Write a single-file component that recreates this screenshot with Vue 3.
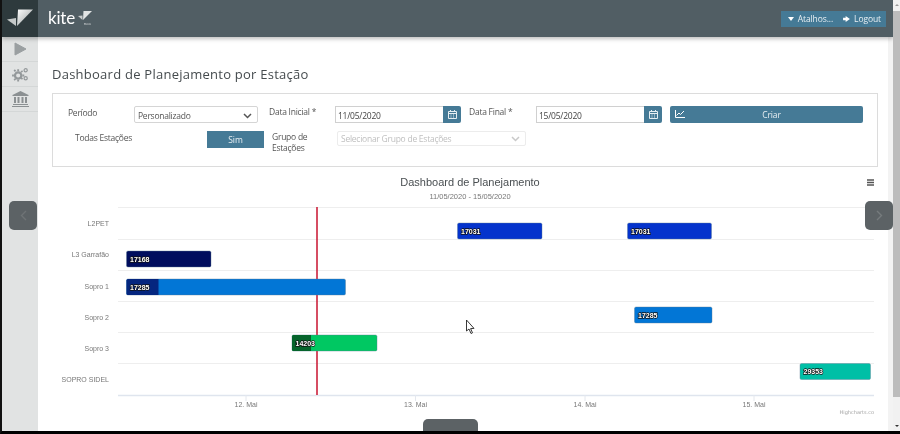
<template>
  <div class="frame">
    <header class="topbar">
      <div class="brand-mark">
        <svg width="36" height="37" viewBox="0 0 36 37">
          <defs>
            <linearGradient id="markGrad" x1="0" y1="0" x2="1" y2="1">
              <stop offset="0" stop-color="#ffffff" />
              <stop offset="0.55" stop-color="#c4c8c8" />
              <stop offset="1" stop-color="#6f7777" />
            </linearGradient>
          </defs>
          <path d="M16 9.5 L31 9.5 L15 26 Z" fill="url(#markGrad)" />
          <path d="M5 19.5 L14 18 L14 26 Z" fill="#c4c8c8" />
        </svg>
      </div>
      <div class="logo">
        <span class="logo-word">kite</span>
        <svg class="logo-mark" width="14" height="13" viewBox="0 0 14 13">
          <path d="M5.5 1 L14 1 L5 10 Z" fill="#e2e4e4" />
          <path d="M0 6 L4.5 5.5 L4.5 10 Z" fill="#c9cccc" />
        </svg>
        <span class="logo-sub">neo</span>
      </div>
      <div class="top-actions">
        <button class="top-btn">
          <svg width="6" height="4" viewBox="0 0 6 4"><path d="M0 0 H6 L3 4 Z" fill="#fff" /></svg>
          Atalhos...
        </button>
        <button class="top-btn">
          <svg width="7" height="6" viewBox="0 0 8 7"><path d="M0 2 H3 V0 L8 3.5 L3 7 V5 H0 Z" fill="#fff" /></svg>
          Logout
        </button>
      </div>
    </header>

    <div class="workspace">
      <aside class="sidebar">
        <div class="side-item">
          <svg width="13" height="14" viewBox="0 0 13 14"><path d="M1 1 L12 7 L1 13 Z" fill="#9a9fa1" stroke="#9a9fa1" /></svg>
        </div>
        <div class="side-item">
          <svg width="17" height="15" viewBox="0 0 18 16" fill="#94999b">
            <circle cx="6.5" cy="9" r="3.4" fill="none" stroke="#94999b" stroke-width="2.4" />
            <path d="M5.5 2.5h2v2h-2zM5.5 13.5h2v2h-2zM0 8h2v2H0zM11 8h2v2h-2zM1.6 3.6l1.4-1.2 1.4 1.6-1.4 1.2zM9 12l1.4-1.2 1.4 1.6-1.4 1.2zM1.6 13.4l1.6-1.6 1.2 1.2-1.6 1.6zM9 5l1.6-1.6 1.2 1.2-1.6 1.6z" />
            <circle cx="14.5" cy="3.5" r="1.7" fill="none" stroke="#94999b" stroke-width="1.3" />
            <circle cx="14.5" cy="12" r="1.7" fill="none" stroke="#94999b" stroke-width="1.3" />
          </svg>
        </div>
        <div class="side-item">
          <svg width="17" height="16" viewBox="0 0 17 16" fill="#8b9092">
            <path d="M8.5 0 L16.5 4 V5 H0.5 V4 Z" />
            <path d="M2 6h2v6H2zM5.5 6h2v6h-2zM9.5 6h2v6h-2zM13 6h2v6h-2z" />
            <path d="M1 13h15v1H1zM0 15h17v1H0z" />
          </svg>
        </div>
      </aside>

      <main class="content">
        <h1 class="page-title">Dashboard de Planejamento por Estação</h1>

        <section class="filters">
          <div class="filter-row first">
            <label class="lbl lbl-period">Período</label>
            <div class="select sel-period">
              <span>Personalizado</span>
              <svg width="9" height="6" viewBox="0 0 9 6"><path d="M1 1 L4.5 4.5 L8 1" fill="none" stroke="#555" stroke-width="1.5" /></svg>
            </div>
            <label class="lbl lbl-start">Data Inicial *</label>
            <div class="date-field start">
              <span class="date-value">11/05/2020</span>
              <span class="date-btn">
                <svg width="9" height="9" viewBox="0 0 9 9"><path d="M0.5 1.5h8v7h-8z M0.5 3.5h8 M2.5 0v2 M6.5 0v2 M2.5 5h1 M5 5h1 M2.5 7h1 M5 7h1" fill="none" stroke="#e6eef2" /></svg>
              </span>
            </div>
            <label class="lbl lbl-end">Data Final *</label>
            <div class="date-field end">
              <span class="date-value">15/05/2020</span>
              <span class="date-btn">
                <svg width="9" height="9" viewBox="0 0 9 9"><path d="M0.5 1.5h8v7h-8z M0.5 3.5h8 M2.5 0v2 M6.5 0v2 M2.5 5h1 M5 5h1 M2.5 7h1 M5 7h1" fill="none" stroke="#e6eef2" /></svg>
              </span>
            </div>
            <button class="btn-create">
              <svg width="10" height="8" viewBox="0 0 10 8"><path d="M0.5 0v7.5h9.5 M1.5 5.5 L4 3 L5.5 4.5 L9 1" fill="none" stroke="#fff" /></svg>
              <span>Criar</span>
            </button>
          </div>
          <div class="filter-row second">
            <label class="lbl lbl-all">Todas Estações</label>
            <button class="btn-yes">Sim</button>
            <label class="lbl lbl-group">Grupo de<br />Estações</label>
            <div class="select sel-group">
              <span>Selecionar Grupo de Estações</span>
              <svg width="9" height="6" viewBox="0 0 9 6"><path d="M1 1 L4.5 4.5 L8 1" fill="none" stroke="#c9c9c9" stroke-width="1.5" /></svg>
            </div>
          </div>
        </section>

        <section class="chart">
          <svg width="826" height="262" viewBox="52 168 826 262">
            <text x="470" y="186" class="chart-title" text-anchor="middle">Dashboard de Planejamento</text>
            <text x="470" y="199" class="chart-sub" text-anchor="middle">11/05/2020 - 15/05/2020</text>
            <path d="M867 180h7M867 182.5h7M867 185h7" stroke="#555" stroke-width="1.6" />

            <line v-for="y in gridLines" :key="y" x1="118" x2="874" :y1="y + 0.5" :y2="y + 0.5" stroke="#eeeeee" />
            <line x1="118" x2="874" y1="395.5" y2="395.5" stroke="#dfe5ee" stroke-width="1.5" />
            <line v-for="t in ticks" :key="t.label" :x1="t.x" :x2="t.x" y1="395" y2="401" stroke="#e4e8ee" />
            <text v-for="t in ticks" :key="'l' + t.label" :x="t.x" y="407" class="tick" text-anchor="middle">{{ t.label }}</text>

            <text v-for="r in rows" :key="r.name" x="109" :y="r.y" class="row-name" text-anchor="end">{{ r.name }}</text>

            <line x1="317" x2="317" y1="207" y2="395" stroke="#c8132f" stroke-width="1.5" />

            <g v-for="b in bars" :key="b.x + '-' + b.y">
              <rect :x="b.x" :y="b.y" :width="b.w" height="16" rx="1.5" :fill="b.color" stroke="#5c7b95" stroke-width="0.4" />
              <path v-if="b.done" :d="`M${b.x + 1.5} ${b.y} H${b.x + b.done} V${b.y + 16} H${b.x + 1.5} Q${b.x} ${b.y + 16} ${b.x} ${b.y + 14.5} V${b.y + 1.5} Q${b.x} ${b.y} ${b.x + 1.5} ${b.y} Z`" :fill="b.doneColor" />
              <text :x="b.x + 3.5" :y="b.y + 10.5" class="bar-label">{{ b.label }}</text>
            </g>

            <text x="874" y="413.5" class="credit" text-anchor="end">Highcharts.co</text>

            <g>
              <path d="M466.5 320 V331 L469 329 L471 333.5 L472.5 332.8 L470.6 328.6 L474 328.4 Z" fill="#fff" stroke="#222" stroke-width="0.9" />
            </g>
          </svg>
        </section>
      </main>
      <div class="scroll-gutter"></div>
      <div class="scrollbar">
        <span class="scroll-arrow up"></span>
        <span class="scroll-thumb"></span>
        <span class="scroll-arrow down"></span>
      </div>
    </div>

    <button class="side-nav prev">
      <svg width="7" height="11" viewBox="0 0 7 11"><path d="M6 1 L1.5 5.5 L6 10" fill="none" stroke="#6e7375" stroke-width="1.4" /></svg>
    </button>
    <button class="side-nav next">
      <svg width="7" height="11" viewBox="0 0 7 11"><path d="M1 1 L5.5 5.5 L1 10" fill="none" stroke="#767b7d" stroke-width="1.4" /></svg>
    </button>
    <div class="bottom-tab"></div>
  </div>
</template>

<script setup>
const gridLines = [207, 239, 270, 301, 332, 363]

const ticks = [
  { x: 246, label: '12. Mai' },
  { x: 415.5, label: '13. Mai' },
  { x: 585, label: '14. Mai' },
  { x: 754, label: '15. Mai' },
]

const rows = [
  { name: 'L2PET', y: 226 },
  { name: 'L3 Garrafão', y: 257 },
  { name: 'Sopro 1', y: 289 },
  { name: 'Sopro 2', y: 320 },
  { name: 'Sopro 3', y: 351 },
  { name: 'SOPRO SIDEL', y: 382 },
]

const bars = [
  { x: 457.5, y: 223, w: 84.5, color: '#0433cc', label: '17031' },
  { x: 627.5, y: 223, w: 84, color: '#0433cc', label: '17031' },
  { x: 126.5, y: 251, w: 84.5, color: '#000d5e', label: '17168' },
  { x: 126.5, y: 279, w: 219, color: '#0276d6', done: 32, doneColor: '#05267f', label: '17285' },
  { x: 634.5, y: 307, w: 77.5, color: '#0276d6', label: '17285' },
  { x: 292, y: 335, w: 85, color: '#00c862', done: 19, doneColor: '#06642c', label: '14203' },
  { x: 800, y: 363.5, w: 70.5, color: '#00bfa6', label: '29353' },
]
</script>

<style scoped>
.frame {
  position: relative;
  width: 900px;
  height: 434px;
  overflow: hidden;
  box-sizing: border-box;
  border-left: 2px solid #111;
  border-bottom: 3px solid #000;
  background: #fff;
  font-family: "Open Sans", "Noto Sans", sans-serif;
  color: #444;
  filter: blur(0.3px);
}

.topbar {
  position: relative;
  z-index: 2;
  display: flex;
  align-items: center;
  width: 891px;
  height: 37px;
  background: #515e64;
  box-shadow: 0 2px 4px rgba(0, 0, 0, 0.25);
}

.brand-mark {
  width: 36px;
  height: 37px;
  background: #2e3a3d;
}

.logo {
  display: flex;
  align-items: center;
  position: relative;
  margin-left: 10px;
  height: 37px;
}

.logo-word {
  font-family: Lato, sans-serif;
  font-weight: 400;
  font-size: 17px;
  letter-spacing: -0.2px;
  color: #fff;
  line-height: 1;
  margin-top: -3px;
}

.logo-mark {
  margin-left: 3px;
  margin-top: -4px;
}

.logo-sub {
  position: absolute;
  right: 1px;
  top: 21px;
  font-size: 4px;
  color: #dfe2e2;
}

.top-actions {
  display: flex;
  align-items: center;
  margin-left: auto;
  margin-right: 7px;
  height: 16px;
  background: #457a96;
  padding: 0 5px 0 7px;
  gap: 10px;
}

.top-btn {
  display: flex;
  align-items: center;
  gap: 4px;
  padding: 0;
  border: 0;
  background: none;
  color: #e8eff3;
  font-family: inherit;
  font-size: 8.5px;
  letter-spacing: -0.1px;
}

.workspace {
  display: flex;
  height: 394px;
}

.sidebar {
  flex: none;
  width: 36px;
  background: #e1e3e3;
  box-shadow: 2px 0 3px rgba(0, 0, 0, 0.08);
}

.side-item {
  display: flex;
  align-items: center;
  justify-content: center;
  height: 24px;
  border-bottom: 1px solid #d4d7d7;
}

.content {
  flex: none;
  width: 850px;
  box-sizing: border-box;
  padding: 28px 10px 0 14px;
  background: #fff;
}

.page-title {
  margin: 0 0 10px;
  font-size: 13px;
  line-height: 18px;
  font-weight: 400;
  letter-spacing: 0.25px;
  color: #454b4e;
}

.filters {
  box-sizing: border-box;
  height: 74px;
  border: 1px solid #dcdcdc;
}

.filter-row {
  display: flex;
  font-size: 8.5px;
  letter-spacing: -0.25px;
}

.filter-row.first {
  height: 17px;
  margin-top: 12px;
}

.filter-row.second {
  margin-top: 8px;
}

.lbl {
  color: #555;
  line-height: 11px;
}

.lbl-period {
  width: 66px;
  margin-left: 15px;
  padding-top: 1px;
}

.sel-period {
  width: 124px;
}

.lbl-start {
  width: 66px;
  margin-left: 11px;
}

.lbl-end {
  width: 67px;
  margin-left: 8px;
}

.select {
  display: flex;
  align-items: center;
  justify-content: space-between;
  box-sizing: border-box;
  padding: 2px 5px 0 3px;
  background: #fff;
  border: 1px solid #d5d5d5;
  border-radius: 2px;
  color: #555;
}

.date-field {
  display: flex;
  width: 126px;
}

.date-value {
  flex: 1;
  box-sizing: border-box;
  padding: 2px 0 0 2px;
  line-height: 13px;
  border: 1px solid #d0d0d0;
  border-right: 0;
  color: #444;
}

.date-btn {
  display: flex;
  align-items: center;
  justify-content: center;
  width: 18px;
  background: #457a96;
  border-radius: 0 2px 2px 0;
}

.btn-create {
  position: relative;
  width: 193px;
  margin-left: 8px;
  padding: 0 0 0 10px;
  border: 0;
  border-radius: 2px;
  background: #457a96;
  color: #e8eff3;
  font-family: inherit;
  font-size: 8.5px;
  letter-spacing: -0.1px;
}

.btn-create svg {
  position: absolute;
  left: 5px;
  top: 4px;
}

.lbl-all {
  width: 132px;
  margin-left: 22px;
  padding-top: 1px;
}

.btn-yes {
  width: 57px;
  height: 17px;
  padding: 0;
  border: 0;
  background: #457a96;
  color: #e8eff3;
  font-family: inherit;
  font-size: 8.5px;
}

.lbl-group {
  width: 65px;
  margin-left: 8px;
}

.sel-group {
  width: 189px;
  height: 15px;
  padding: 0 5px 0 3px;
  border-color: #ececec;
  color: #c0c0c0;
}

.chart {
  margin-top: 1px;
}

.chart svg {
  display: block;
}

.chart-title {
  font-family: "Liberation Sans", sans-serif;
  font-size: 11px;
  fill: #4a4f52;
}

.chart-sub {
  font-family: "Liberation Sans", sans-serif;
  font-size: 7.5px;
  fill: #777;
}

.row-name {
  font-family: "Liberation Sans", sans-serif;
  font-size: 7px;
  fill: #777;
}

.tick {
  font-family: "Liberation Sans", sans-serif;
  font-size: 7px;
  fill: #777;
}

.credit {
  font-family: "DejaVu Sans", sans-serif;
  font-size: 5px;
  fill: #a5a5a5;
}

.bar-label {
  font-family: "Liberation Sans", sans-serif;
  font-size: 7px;
  font-weight: 700;
  fill: #fff;
  stroke: #111;
  stroke-width: 1.3px;
  paint-order: stroke;
}

.scroll-gutter {
  flex: none;
  width: 5px;
  background: #f3f3f3;
}

.scrollbar {
  display: flex;
  flex-direction: column;
  flex: none;
  width: 7px;
  margin-top: -37px;
  background: #f1f1f1;
  position: relative;
  z-index: 3;
}

.scroll-thumb {
  flex: none;
  height: 386px;
  background: #bcbcbc;
}

.scroll-arrow {
  flex: none;
  height: 11px;
  position: relative;
}

.scroll-arrow.down {
  margin-top: auto;
}

.scroll-arrow::after {
  content: "";
  position: absolute;
  left: 2px;
  top: 4px;
  border-left: 2px solid transparent;
  border-right: 2px solid transparent;
}

.scroll-arrow.up::after {
  border-bottom: 2px solid #999;
}

.scroll-arrow.down::after {
  top: 5px;
  border-top: 2px solid #333;
}

.side-nav {
  position: absolute;
  top: 201px;
  z-index: 4;
  display: flex;
  align-items: center;
  justify-content: center;
  width: 28px;
  height: 29px;
  padding: 0;
  border: 0;
  border-radius: 5px;
  background: #5c6265;
}

.side-nav.prev {
  left: 7px;
}

.side-nav.next {
  left: 863px;
}

.bottom-tab {
  position: absolute;
  left: 421px;
  top: 419px;
  width: 55px;
  height: 20px;
  border-radius: 5px 5px 0 0;
  background: #5c6265;
}
</style>
